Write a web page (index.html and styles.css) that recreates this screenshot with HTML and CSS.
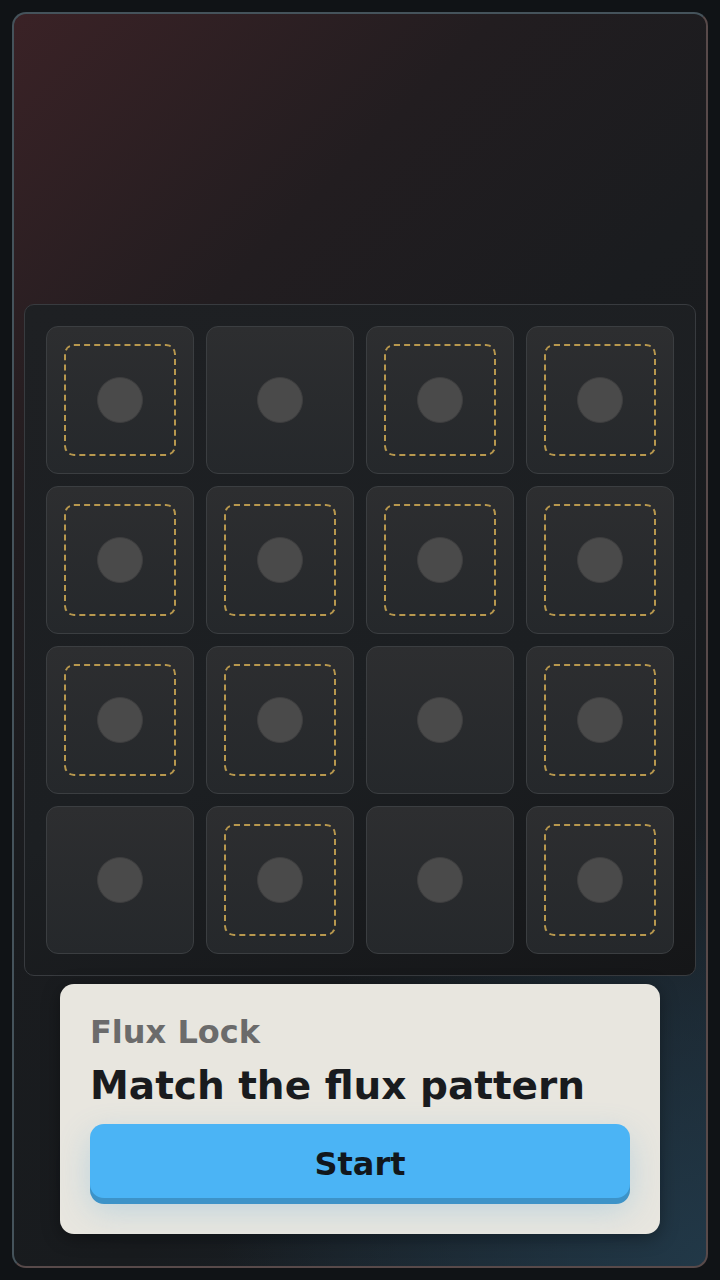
FILE: index.html
```html
<!DOCTYPE html>
<html>
<head>
    <title>Flux Lock</title>
    <link rel="stylesheet" href="styles.css">
</head>
<body>
    <div class="frame">
        <div class="board">
            <div class="tile marked"><span class="dot"></span></div>
            <div class="tile"><span class="dot"></span></div>
            <div class="tile marked"><span class="dot"></span></div>
            <div class="tile marked"><span class="dot"></span></div>

            <div class="tile marked"><span class="dot"></span></div>
            <div class="tile marked"><span class="dot"></span></div>
            <div class="tile marked"><span class="dot"></span></div>
            <div class="tile marked"><span class="dot"></span></div>

            <div class="tile marked"><span class="dot"></span></div>
            <div class="tile marked"><span class="dot"></span></div>
            <div class="tile"><span class="dot"></span></div>
            <div class="tile marked"><span class="dot"></span></div>

            <div class="tile"><span class="dot"></span></div>
            <div class="tile marked"><span class="dot"></span></div>
            <div class="tile"><span class="dot"></span></div>
            <div class="tile marked"><span class="dot"></span></div>
        </div>

        <div class="panel">
            <div class="kicker">Flux Lock</div>
            <h1 class="prompt">Match the flux pattern</h1>
            <button class="start">Start</button>
        </div>
    </div>
</body>
</html>
```

FILE: styles.css
```css
html, body {
    height: 100%;
}

body {
    margin: 0;
    padding: 12px;
    box-sizing: border-box;
    background-color: #101316;
    font-family: "DejaVu Sans", Arial, sans-serif;
}

.frame {
    height: 100%;
    box-sizing: border-box;
    border: 2px solid;
    border-color: #45535b #584a4a #584a4a #45535b;
    border-radius: 14px;
    padding: 0 10px 32px;
    display: flex;
    flex-direction: column;
    justify-content: flex-end;
    align-items: center;
    background:
        radial-gradient(ellipse 70% 35% at 100% 100%, rgba(34, 58, 74, 0.9), rgba(34, 58, 74, 0) 100%),
        linear-gradient(135deg, #3a2226 0%, #221d20 25%, #1a1c1f 45%, #181b1e 70%, #1b2630 100%);
}

.board {
    width: 100%;
    box-sizing: border-box;
    border: 1px solid #383b3f;
    border-radius: 10px;
    padding: 21px;
    display: grid;
    grid-template-columns: repeat(4, 148px);
    grid-auto-rows: 148px;
    gap: 12px;
    background: linear-gradient(160deg, #1e2023 0%, #1c1f22 60%, #151618 100%);
}

.tile {
    box-sizing: border-box;
    border: 1px solid #3b3e41;
    border-radius: 12px;
    background: linear-gradient(180deg, #2d2e30 0%, #25282b 100%);
    display: flex;
    align-items: center;
    justify-content: center;
    position: relative;
}

.tile.marked::before {
    content: "";
    position: absolute;
    left: 17px;
    top: 17px;
    right: 17px;
    bottom: 17px;
    border: 2px dashed #b8984e;
    border-radius: 10px;
}

.dot {
    width: 44px;
    height: 44px;
    border-radius: 50%;
    background-color: #4a4a4a;
    border: 1px solid #3e3e3f;
}

.panel {
    width: 600px;
    box-sizing: border-box;
    margin-top: 8px;
    padding: 30px;
    border-radius: 14px;
    background-color: #e8e6df;
    box-shadow: 0 4px 18px rgba(0, 0, 0, 0.35);
}

.kicker {
    font-size: 32px;
    font-weight: bold;
    color: #6b6b6b;
    line-height: 36px;
}

.prompt {
    margin: 14px 0 16px;
    font-size: 39px;
    line-height: 44px;
    font-weight: bold;
    color: #191b1e;
}

.start {
    display: block;
    width: 100%;
    height: 74px;
    margin-bottom: 6px;
    padding: 6px 0 0;
    border: none;
    border-radius: 14px;
    background-color: #4bb4f5;
    color: #11171c;
    font-family: "DejaVu Sans", Arial, sans-serif;
    font-size: 32px;
    font-weight: bold;
    cursor: pointer;
    box-shadow: 0 6px 0 #3d93c8, 0 12px 32px rgba(90, 170, 220, 0.3);
}
```
